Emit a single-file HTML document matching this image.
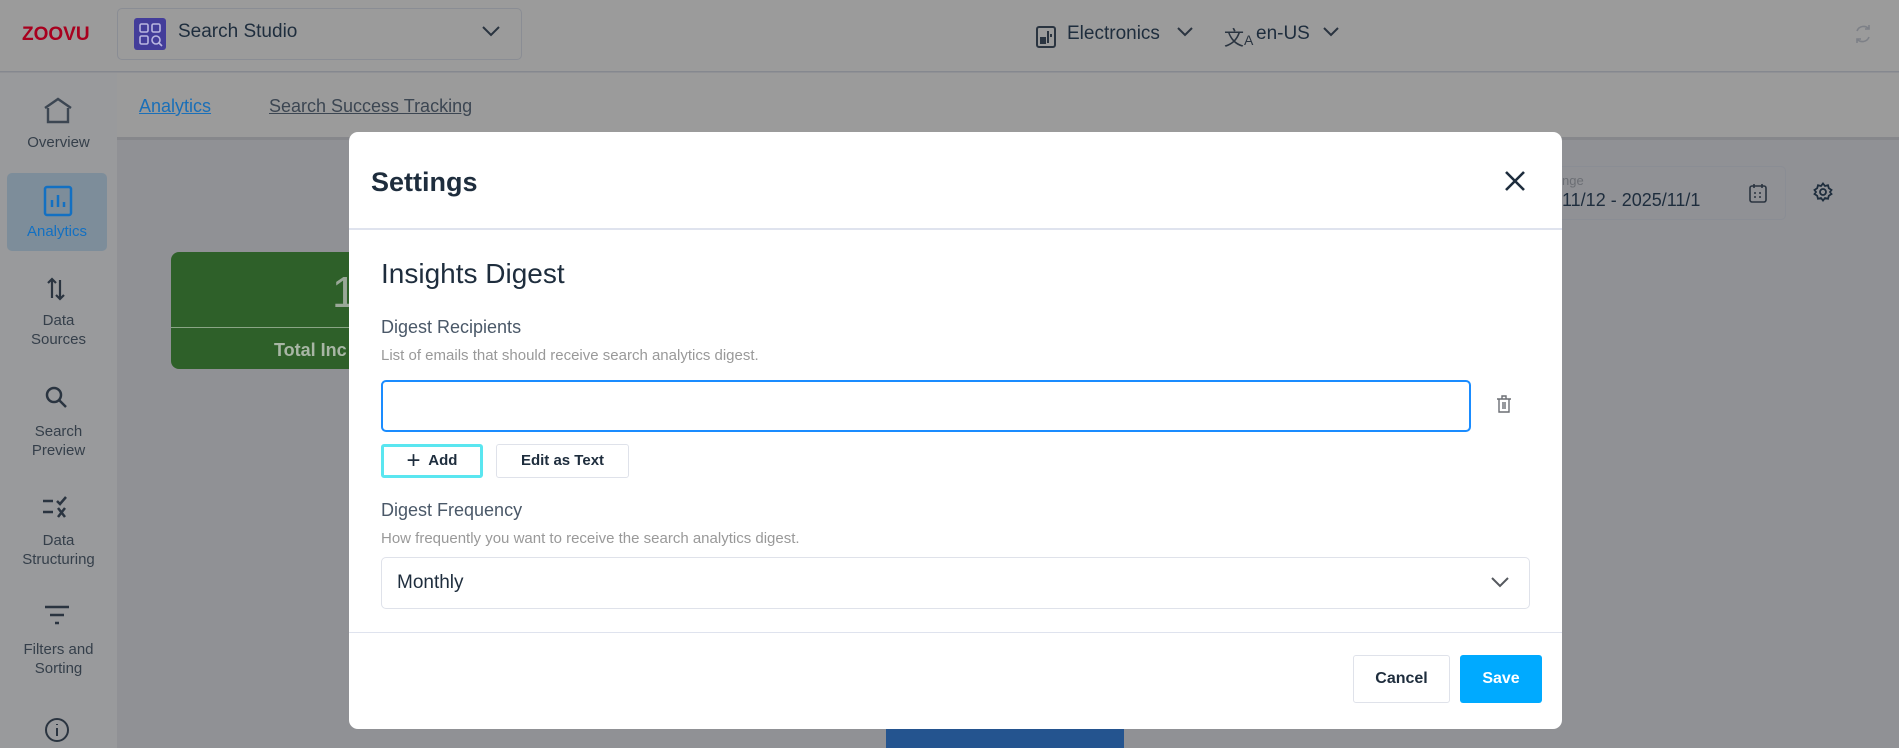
<!DOCTYPE html>
<html><head><meta charset="utf-8"><style>
*{box-sizing:border-box;margin:0;padding:0}
body{width:1899px;height:748px;overflow:hidden;font-family:"Liberation Sans",sans-serif;background:#909195;position:relative;color:#1e2d3d}
.abs{position:absolute}
.hdr{left:0;top:0;width:1899px;height:72px;background:#9b9b9b;border-bottom:1px solid #85888f}
.side{left:0;top:73px;width:117px;height:675px;background:#999a9c}
.tabs{left:117px;top:73px;width:1782px;height:67px;background:#9b9b9b;border-bottom:3px solid #86878b}
.si{position:absolute;left:0;width:117px;text-align:center;font-size:15px;color:#353f4a;line-height:19px}
.t{white-space:nowrap}
.modal{left:349px;top:132px;width:1213px;height:597px;background:#fff;border-radius:9px}
.btn{position:absolute;border:1px solid #dfe2ea;border-radius:3px;background:#fff;font-weight:bold;font-size:15px;text-align:center;color:#1e2d3d}
</style></head><body>
<div class="abs hdr"></div>
<div class="abs t" style="left:22px;top:24px;font-weight:900;font-size:19px;color:#a8001e;letter-spacing:0px">ZOOVU</div>
<div class="abs" style="left:117px;top:8px;width:405px;height:52px;border:1px solid #8a8d94;border-radius:5px"></div>
<div class="abs" style="left:134px;top:18px;width:32px;height:32px;background:#433d9a;border-radius:3px">
<svg width="32" height="32" viewBox="0 0 32 32" fill="none" stroke="#b9b6e0" stroke-width="1.6"><rect x="6" y="6" width="8" height="8" rx="1.5"/><rect x="18" y="6" width="8" height="8" rx="1.5"/><rect x="6" y="18" width="8" height="8" rx="1.5"/><circle cx="22" cy="22" r="4"/><path d="M25 25l3 3"/></svg></div>
<div class="abs t" style="left:178px;top:21px;font-size:19px;color:#1e2d3d">Search Studio</div>
<svg class="abs" style="left:481px;top:24px" width="20" height="14" viewBox="0 0 20 14"><path d="M2 3l8 8 8-8" fill="none" stroke="#2a3440" stroke-width="2"/></svg>
<svg class="abs" style="left:1035px;top:25px" width="22" height="24" viewBox="0 0 22 24" fill="none" stroke="#2a3440" stroke-width="2"><rect x="2" y="2" width="18" height="20" rx="2"/><rect x="6" y="13" width="4" height="5" fill="#2a3440"/><path d="M13 6v12M16 9v3"/></svg>
<div class="abs t" style="left:1067px;top:23px;font-size:19px">Electronics</div>
<svg class="abs" style="left:1176px;top:25px" width="18" height="14" viewBox="0 0 18 14"><path d="M2 3l7 7 7-7" fill="none" stroke="#2a3440" stroke-width="2"/></svg>
<div class="abs t" style="left:1224px;top:22px;font-size:20px;color:#2a3440">文<span style="font-size:14px">A</span></div>
<div class="abs t" style="left:1256px;top:23px;font-size:19px">en-US</div>
<svg class="abs" style="left:1322px;top:25px" width="18" height="14" viewBox="0 0 18 14"><path d="M2 3l7 7 7-7" fill="none" stroke="#2a3440" stroke-width="2"/></svg>
<svg class="abs" style="left:1853px;top:22px" width="20" height="24" viewBox="0 0 20 24" fill="none" stroke="#7d8087" stroke-width="1.6"><path d="M4 9a7 7 0 0 1 12-2M16 15a7 7 0 0 1-12 2M16 3v4h-4M4 21v-4h4"/></svg>

<div class="abs side"></div>
<div class="abs tabs"></div>
<div class="abs t" style="left:139px;top:96px;font-size:18px;color:#1a6fb8;text-decoration:underline">Analytics</div>
<div class="abs t" style="left:269px;top:96px;font-size:18px;color:#3c4652;text-decoration:underline">Search Success Tracking</div>

<svg class="abs" style="left:42px;top:96px" width="32" height="30" viewBox="0 0 32 30" fill="none" stroke="#3c4652" stroke-width="2.4"><path d="M3 12L16 3l13 9M6 12v14h20V12"/></svg>
<div class="si" style="top:133px">Overview</div>
<div class="abs" style="left:7px;top:173px;height:78px;background:#7d8d9a;border-radius:5px;width:100px"></div>
<svg class="abs" style="left:43px;top:185px" width="30" height="32" viewBox="0 0 30 32" fill="none" stroke="#1370c2" stroke-width="2.5"><rect x="2" y="2" width="26" height="28" rx="2"/><path d="M9 22v-7M15 22v-12M21 22v-5"/></svg>
<div class="si" style="top:222px;color:#1370c2;width:114px">Analytics</div>
<svg class="abs" style="left:46px;top:276px" width="22" height="26" viewBox="0 0 22 26" fill="none" stroke="#2a3440" stroke-width="2.2"><path d="M6 22V3M2 7l4-4 4 4M14 4v19M10 19l4 4 4-4"/></svg>
<div class="si" style="top:311px">Data<br>Sources</div>
<svg class="abs" style="left:44px;top:385px" width="26" height="26" viewBox="0 0 26 26" fill="none" stroke="#2a3440" stroke-width="2.5"><circle cx="10" cy="10" r="7"/><path d="M15 15l7 7"/></svg>
<div class="si" style="top:422px">Search<br>Preview</div>
<svg class="abs" style="left:42px;top:494px" width="28" height="26" viewBox="0 0 28 26" fill="none" stroke="#2a3440" stroke-width="2.5"><path d="M1 7h10M1 18h10M15 7l3 3 6-7M16 14l7 9M23 14l-7 9"/></svg>
<div class="si" style="top:531px">Data<br>Structuring</div>
<svg class="abs" style="left:43px;top:604px" width="28" height="24" viewBox="0 0 28 24" fill="none" stroke="#2a3440" stroke-width="2.6"><path d="M2 3h24M7 11h14M12 19h4"/></svg>
<div class="si" style="top:640px">Filters and<br>Sorting</div>
<svg class="abs" style="left:44px;top:717px" width="26" height="26" viewBox="0 0 26 26" fill="none" stroke="#2a3440" stroke-width="2"><circle cx="13" cy="13" r="11"/><path d="M13 11v8M13 7v1"/></svg>

<div class="abs" style="left:171px;top:252px;width:190px;height:117px;background:#2e6029;border-radius:8px"></div>
<div class="abs" style="left:171px;top:327px;width:190px;height:1px;background:#8aa585"></div>
<div class="abs t" style="left:332px;top:268px;font-size:44px;color:#9aa898">1</div>
<div class="abs t" style="left:274px;top:340px;font-size:18px;font-weight:bold;color:#a8b6a5">Total Inc</div>
<div class="abs" style="left:1530px;top:166px;width:256px;height:54px;border:1px solid #8a8d94;border-radius:5px"></div>
<div class="abs t" style="left:1562px;top:173px;font-size:13px;color:#6b6e74">nge</div>
<div class="abs t" style="left:1562px;top:190px;font-size:18px">11/12 - 2025/11/1</div>
<svg class="abs" style="left:1749px;top:183px" width="18" height="20" viewBox="0 0 18 20" fill="none" stroke="#2a3440" stroke-width="1.6"><rect x="1" y="3" width="16" height="16" rx="2"/><path d="M5 1v4M13 1v4M5 10h2M10 10h2M5 14h2M10 14h2"/></svg>
<svg class="abs" style="left:1813px;top:182px" width="20" height="20" viewBox="0 0 20 20" fill="none" stroke="#1e2d3d" stroke-width="1.8"><circle cx="10" cy="10" r="3"/><path d="M10 1.5l2 2.5 3-.8.8 3 2.7 1.8-1.5 2 1.5 2-2.7 1.8-.8 3-3-.8-2 2.5-2-2.5-3 .8-.8-3L1.5 12l1.5-2-1.5-2 2.7-1.8.8-3 3 .8z"/></svg>
<div class="abs" style="left:886px;top:727px;width:238px;height:21px;background:#24548f"></div>

<div class="abs modal">
<div class="abs t" style="left:22px;top:35px;font-size:27px;font-weight:bold;color:#1e2d3d">Settings</div>
<svg class="abs" style="left:1155px;top:38px" width="22" height="22" viewBox="0 0 22 22"><path d="M2 2l18 18M20 2L2 20" stroke="#1e2d3d" stroke-width="2.6"/></svg>
<div class="abs" style="left:0;top:96px;width:1213px;height:2px;background:#dfe3ee"></div>
<div class="abs t" style="left:32px;top:126px;font-size:28px;color:#1e2d3d">Insights Digest</div>
<div class="abs t" style="left:32px;top:185px;font-size:18px;color:#4a5868">Digest Recipients</div>
<div class="abs t" style="left:32px;top:215px;font-size:15px;color:#999">List of emails that should receive search analytics digest.</div>
<div class="abs" style="left:32px;top:248px;width:1090px;height:52px;border:2px solid #1a8cff;border-radius:5px"></div>
<svg class="abs" style="left:1147px;top:262px" width="16" height="20" viewBox="0 0 16 20" fill="none" stroke="#6b6e74" stroke-width="1.4"><path d="M1 5h14M6 5V2h4v3M3 5v13h10V5M7 8v7M9 8v7"/></svg>
<div class="btn" style="left:32px;top:312px;width:102px;height:34px;border:3px solid #5ae6f0;line-height:28px"><span style="font-size:24px;font-weight:normal;vertical-align:-3px">+</span>&nbsp; Add</div>
<div class="btn" style="left:147px;top:312px;width:133px;height:34px;line-height:32px">Edit as Text</div>
<div class="abs t" style="left:32px;top:368px;font-size:18px;color:#4a5868">Digest Frequency</div>
<div class="abs t" style="left:32px;top:398px;font-size:15px;color:#999">How frequently you want to receive the search analytics digest.</div>
<div class="abs" style="left:32px;top:425px;width:1149px;height:52px;border:1px solid #dfe2ea;border-radius:5px"></div>
<div class="abs t" style="left:48px;top:440px;font-size:19px;color:#1e2d3d">Monthly</div>
<svg class="abs" style="left:1141px;top:443px" width="20" height="14" viewBox="0 0 20 14"><path d="M2 3l8 8 8-8" fill="none" stroke="#55595f" stroke-width="2"/></svg>
<div class="abs" style="left:0;top:500px;width:1213px;height:1px;background:#dfe3ee"></div>
<div class="btn" style="left:1004px;top:523px;width:97px;height:48px;line-height:46px;font-size:16px">Cancel</div>
<div class="btn" style="left:1111px;top:523px;width:82px;height:48px;line-height:48px;font-size:16px;background:#00aaff;border:none;color:#fff">Save</div>
</div>
</body></html>
